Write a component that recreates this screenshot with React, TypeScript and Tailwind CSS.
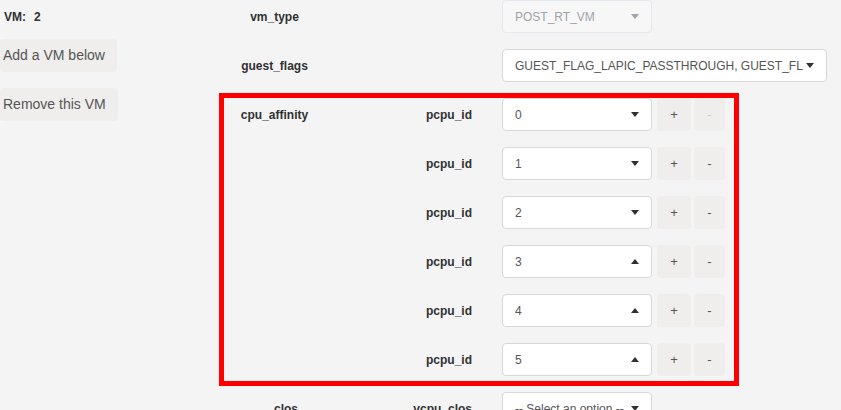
const font = { fontFamily: '"Liberation Sans", Arial, sans-serif' }

const Caret = ({ up }: { up?: boolean }) => (
  <svg width="8" height="5" viewBox="0 0 8 5" className="shrink-0">
    {up ? <polygon points="0,5 8,5 4,0" fill="#303133" /> : <polygon points="0,0 8,0 4,5" fill="#303133" />}
  </svg>
)

const Select = ({ value, up, disabled, wide }: { value: string; up?: boolean; disabled?: boolean; wide?: boolean }) => (
  <div
    className={
      'h-[33px] flex items-center justify-between rounded-[4px] border pl-[12px] pr-[12px] ' +
      (wide ? 'w-[325px] ' : 'w-[150px] ') +
      (disabled ? 'bg-[#f7f7f7] border-[#e4e7ed] text-[#a0a3a8]' : 'bg-white border-[#d8d8d8] text-[#555]')
    }
  >
    <span className="text-[12px] whitespace-nowrap overflow-hidden pr-[4px]">{value}</span>
    {disabled ? (
      <svg width="8" height="5" viewBox="0 0 8 5" className="shrink-0">
        <polygon points="0,0 8,0 4,5" fill="#a0a3a8" />
      </svg>
    ) : (
      <Caret up={up} />
    )}
  </div>
)

const Label = ({ text }: { text: string }) => (
  <div className="w-[101px] h-[33px] flex items-center justify-center text-[12px] font-bold text-[#303133]">{text}</div>
)

const SubLabel = ({ text }: { text?: string }) => (
  <div className="w-[147px] pr-[30px] h-[33px] flex items-center justify-end text-[12px] font-bold text-[#303133] box-content">
    {text}
  </div>
)

const PcpuRow = ({ id, up, first }: { id: number; up?: boolean; first?: boolean }) => (
  <div className="flex items-center">
    {first ? <Label text="cpu_affinity" /> : <div className="w-[101px]" />}
    <SubLabel text="pcpu_id" />
    <Select value={String(id)} up={up} />
    <div className="ml-[5px] w-[34px] h-[33px] rounded-[4px] bg-[#efeeec] flex items-center justify-center text-[13px] text-[#555]">+</div>
    <div
      className={
        'ml-[3px] w-[31px] h-[33px] rounded-[4px] bg-[#efeeec] flex items-center justify-center text-[13px] ' +
        (first ? 'text-[#c8c8c8]' : 'text-[#555]')
      }
    >
      -
    </div>
  </div>
)

export default function App() {
  return (
    <div className="w-[841px] h-[410px] overflow-hidden bg-[#f4f4f4] flex" style={font}>
      <div className="w-[219px] shrink-0 flex flex-col">
        <div className="h-[33px] flex items-center pl-[4px] text-[12px] font-bold text-[#303133]">
          <span>VM:</span>
          <span className="ml-[8px]">2</span>
        </div>
        <div className="mt-[6px] w-[117px] h-[33px] rounded-[4px] bg-[#efeeec] flex items-center pl-[3px] text-[14px] text-[#555]">
          Add a VM below
        </div>
        <div className="mt-[16px] w-[118px] h-[33px] rounded-[4px] bg-[#efeeec] flex items-center pl-[3px] text-[14px] text-[#555]">
          Remove this VM
        </div>
      </div>

      <div className="flex flex-col">
        <div className="flex items-center pl-[5px]">
          <Label text="vm_type" />
          <SubLabel />
          <Select value="POST_RT_VM" disabled />
        </div>
        <div className="flex items-center pl-[5px] mt-[16px]">
          <Label text="guest_flags" />
          <SubLabel />
          <Select value="GUEST_FLAG_LAPIC_PASSTHROUGH, GUEST_FL" wide />
        </div>

        <div className="mt-[11px] w-[520px] border-[5px] border-[#ff0000] pb-[5px] flex flex-col gap-[16px]">
          <PcpuRow id={0} first />
          <PcpuRow id={1} />
          <PcpuRow id={2} />
          <PcpuRow id={3} up />
          <PcpuRow id={4} up />
          <PcpuRow id={5} up />
        </div>

        <div className="flex items-center pl-[5px] mt-[6px]">
          <div className="w-[101px] h-[33px] flex items-center pl-[50px] text-[12px] font-bold text-[#303133]">clos</div>
          <SubLabel text="vcpu_clos" />
          <Select value="-- Select an option --" />
        </div>
      </div>
    </div>
  )
}
